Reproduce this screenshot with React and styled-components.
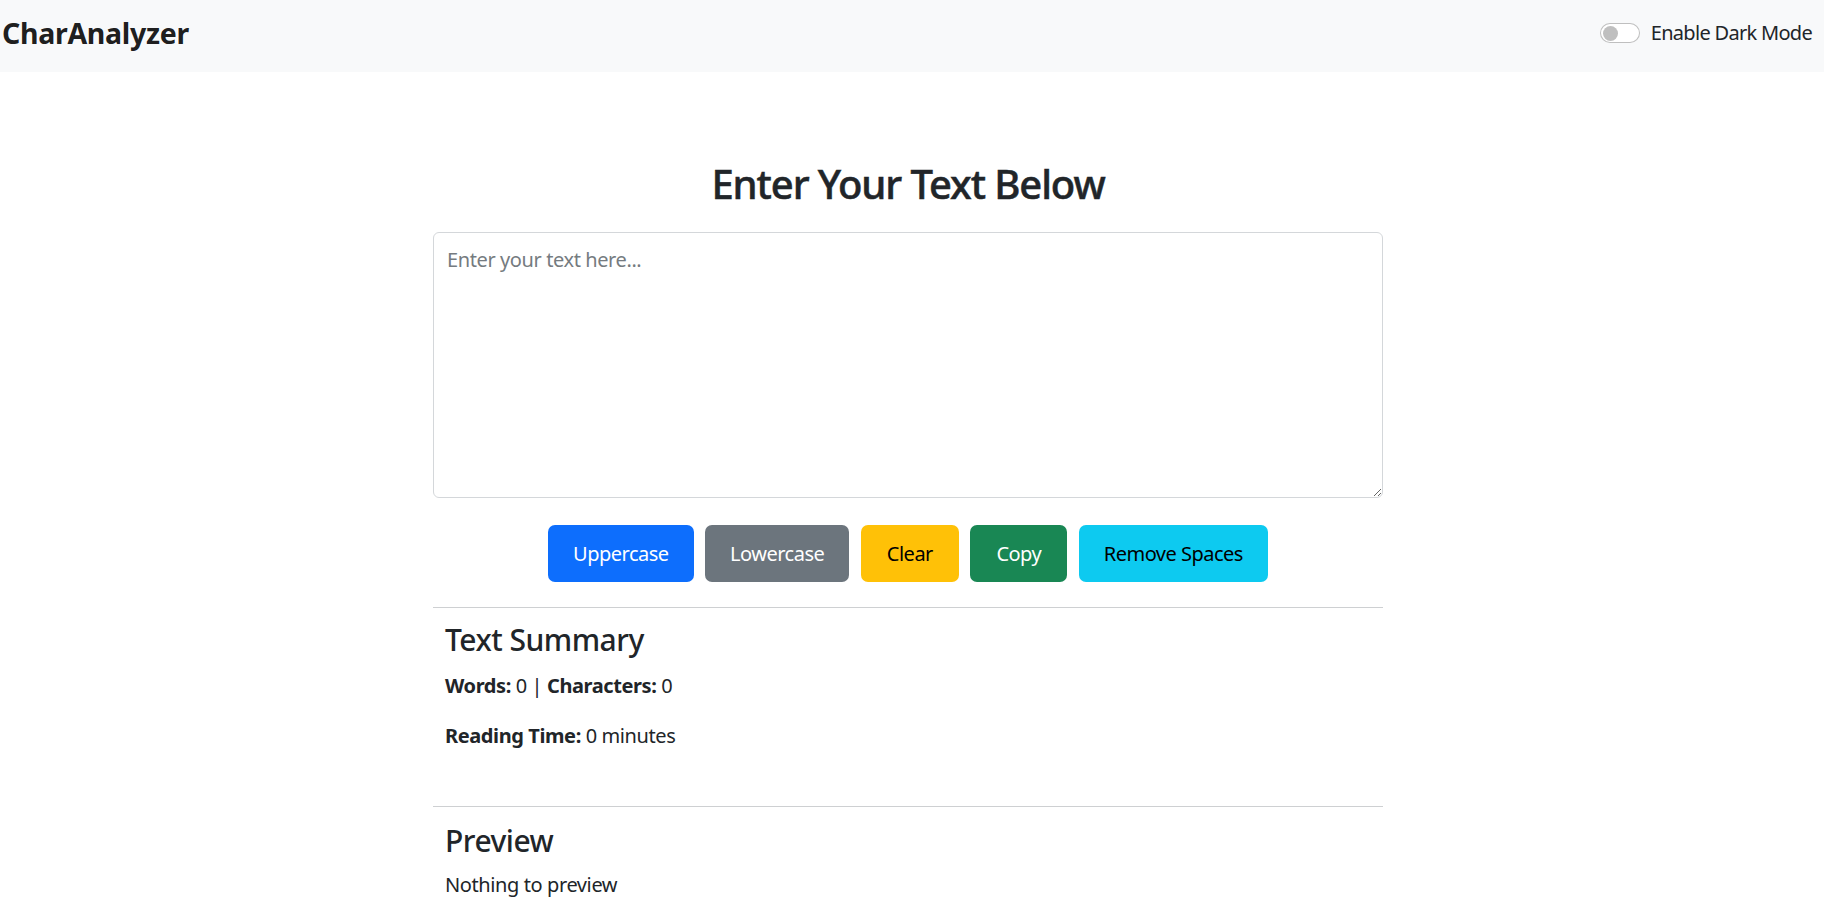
import React from 'react'
import styled, { createGlobalStyle } from 'styled-components'

const GlobalStyle = createGlobalStyle`
   body {
      margin: 0;
      background: #fff;
      color: #212529;
      font-family: "Noto Sans", "Open Sans", sans-serif;
      font-size: 20px;
      line-height: 1.5;
   }
   * { box-sizing: border-box; }
`

const Navbar = styled.nav`
   height: 72px;
   background: #f8f9fa;
   display: flex;
   align-items: center;
   justify-content: space-between;
   padding: 0 12px 6px 2px;
`

const Brand = styled.a`
   font-size: 28.5px;
   font-weight: 700;
   color: rgba(0, 0, 0, 0.9);
   text-decoration: none;
   letter-spacing: -0.3px;
`

const SwitchLabel = styled.label`
   display: flex;
   align-items: center;
   gap: 11px;
   font-size: 20px;
   letter-spacing: -0.7px;
   color: #212529;
`

const SwitchTrack = styled.span`
   width: 40px;
   height: 20px;
   border-radius: 10px;
   border: 1px solid rgba(0, 0, 0, 0.25);
   background: #fff;
   display: flex;
   align-items: center;
   padding-left: 2px;

   &::before {
      content: "";
      width: 15px;
      height: 15px;
      border-radius: 50%;
      background: #bfbfbf;
   }
`

const Shift = styled.div`
   padding-right: 8px;
`

const Main = styled.main`
   width: 950px;
   margin: 0 auto;
   padding-top: 88px;
`

const Title = styled.h2`
   margin: 0 0 24px;
   text-align: center;
   font-size: 40px;
   font-weight: 500;
   line-height: 1.2;
   letter-spacing: -1.1px;
   -webkit-text-stroke: 0.5px #212529;
`

const TextArea = styled.textarea`
   display: block;
   width: 100%;
   height: 266px;
   border: 1px solid #d4d7da;
   border-radius: 6px;
   padding: 12px 13px;
   font-family: inherit;
   font-size: 20px;
   line-height: 1.5;
   color: #212529;
   letter-spacing: -0.4px;
   outline: none;

   &::placeholder {
      color: #757b80;
   }
`

const ButtonRow = styled.div`
   display: flex;
   justify-content: center;
   gap: 11.5px;
   margin: 27px 0 25px;
`

const palette = {
   primary: ['#0d6efd', '#fff'],
   secondary: ['#6c757d', '#fff'],
   warning: ['#ffc107', '#000'],
   success: ['#198754', '#fff'],
   info: ['#0dcaf0', '#000'],
}

const Button = styled.button`
   height: 57px;
   padding: 0 ${p => p.pad || 25}px;
   border: none;
   border-radius: 7px;
   font-family: inherit;
   font-size: 20px;
   letter-spacing: -0.5px;
   background: ${p => palette[p.variant][0]};
   color: ${p => palette[p.variant][1]};
   cursor: pointer;
`

const Rule = styled.hr`
   margin: 0;
   border: none;
   border-top: 1px solid #ced0d2;
`

const Section = styled.section`
   padding: ${p => p.top}px 12px 0;
   min-height: ${p => p.minH || 0}px;
`

const SectionTitle = styled.h4`
   margin: 0 0 ${p => p.gap}px;
   font-size: 30px;
   font-weight: 500;
   line-height: 1.2;
   letter-spacing: -0.5px;
`

const Line = styled.p`
   margin: 0 0 20px;
   letter-spacing: -0.4px;

   &:last-child { margin-bottom: 0; }
`

function App() {
   return (
      <>
         <GlobalStyle />
         <Navbar>
            <Brand href="#">CharAnalyzer</Brand>
            <SwitchLabel>
               <SwitchTrack />
               Enable Dark Mode
            </SwitchLabel>
         </Navbar>
         <Shift>
            <Main>
               <Title>Enter Your Text Below</Title>
               <TextArea placeholder="Enter your text here..." />
               <ButtonRow>
                  <Button variant="primary">Uppercase</Button>
                  <Button variant="secondary">Lowercase</Button>
                  <Button variant="warning" pad={26}>Clear</Button>
                  <Button variant="success" pad={26}>Copy</Button>
                  <Button variant="info">Remove Spaces</Button>
               </ButtonRow>
               <Rule />
               <Section top={14} minH={198}>
                  <SectionTitle gap={13}>Text Summary</SectionTitle>
                  <Line><b>Words:</b> 0 | <b>Characters:</b> 0</Line>
                  <Line><b>Reading Time:</b> 0 minutes</Line>
               </Section>
               <Rule />
               <Section top={16}>
                  <SectionTitle gap={11}>Preview</SectionTitle>
                  <Line>Nothing to preview</Line>
               </Section>
            </Main>
         </Shift>
      </>
   )
}

export default App
